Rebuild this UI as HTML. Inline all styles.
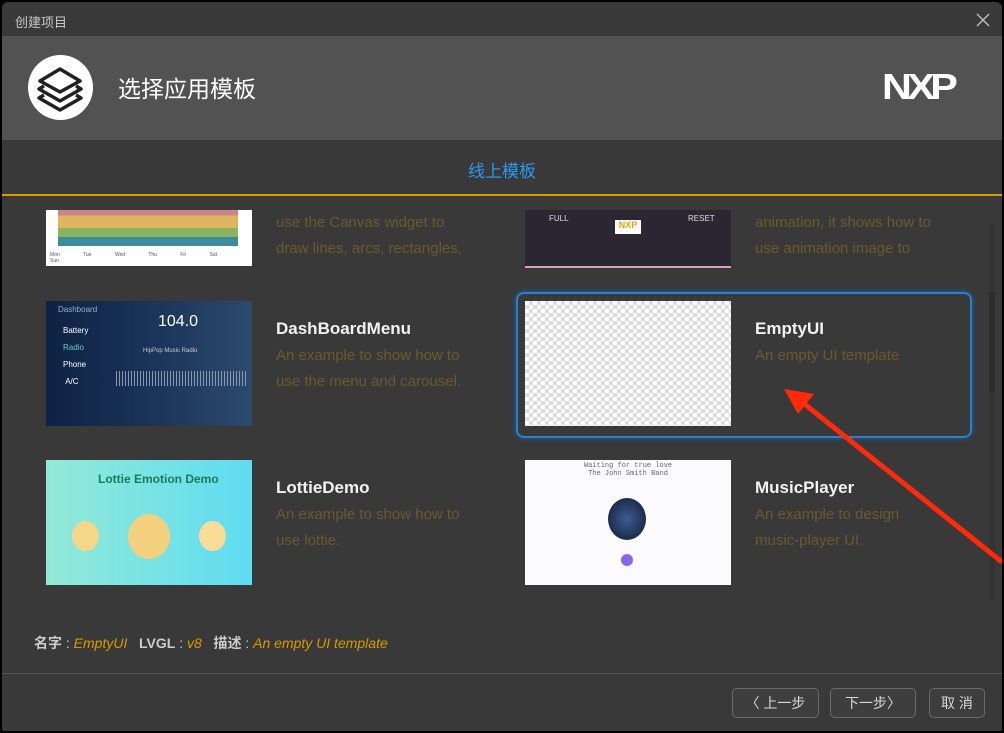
<!DOCTYPE html>
<html><head><meta charset="utf-8"><style>
*{margin:0;padding:0;box-sizing:border-box}
body{width:1004px;height:733px;background:#000;font-family:"Liberation Sans","Noto Sans CJK SC",sans-serif;overflow:hidden;position:relative}
.win{position:absolute;left:2px;top:2px;width:1000px;height:729px;background:#393939;border-radius:6px 6px 2px 2px;overflow:hidden}
.abs{position:absolute}
.title{left:13px;top:10px;color:#c8c8c8;font-size:13px}
.hdr{left:0;top:34px;width:1000px;height:104px;background:#525252}
.tab{left:0;top:155px;width:1000px;text-align:center;color:#2a9af0;font-size:17px}
.line{left:0;top:192px;width:1000px;height:2px;background:#d89a00}
.img{position:absolute;width:206px}
.name{position:absolute;color:#f2f2f2;font-size:17px;font-weight:bold}
.desc{position:absolute;color:#6b5a2a;font-size:15px;line-height:26px}
.btn{position:absolute;top:686px;height:30px;border:1px solid #6a6a6a;border-radius:5px;background:#3e3e3e;color:#d8d8d8;font-size:14px;text-align:center;line-height:28px}
</style></head><body>
<div class="win">
<div class="abs title">创建项目</div>
<svg class="abs" style="left:973px;top:10px" width="16" height="16"><path d="M2 2 L14 14 M14 2 L2 14" stroke="#bbb" stroke-width="1.5"/></svg>
<div class="abs hdr">
 <div class="abs" style="left:26px;top:19px;width:65px;height:65px;border-radius:50%;background:#fff">
  <svg width="65" height="65" viewBox="0 0 65 65"><g fill="none" stroke="#222" stroke-width="3.5" stroke-linejoin="round"><path d="M32 14 L52 26 L32 37 L12 26 Z"/><path d="M16 31 L11 34 L32 46 L53 34 L48 31"/><path d="M16 40 L11 43 L32 55 L53 43 L48 40"/></g></svg>
 </div>
 <div class="abs" style="left:116px;top:34px;color:#fff;font-size:23px">选择应用模板</div>
 <div class="abs" style="left:880px;top:30px;color:#fff;font-size:36px;font-weight:900;letter-spacing:-4px;transform:scaleX(1.15);transform-origin:left">NXP</div>
</div>
<div class="abs tab">线上模板</div>
<div class="abs line"></div>
<div class="abs" style="left:0;top:208px;width:1000px;height:392px;overflow:hidden">
 <div class="img" style="left:44px;top:0;height:56px;background:#fff">
  <div class="abs" style="left:12px;top:0;width:180px;height:36px;background:linear-gradient(#c98589 0 15%,#e0b560 15% 50%,#8ab560 50% 75%,#3d8ba0 75%)"></div>
  <div class="abs" style="left:4px;top:42px;width:196px;color:#555;font-size:5px;word-spacing:22px">Mon Tue Wed Thu Fri Sat Sun</div>
 </div>
 <div class="desc" style="left:274px;top:0">use the Canvas widget to<br>draw lines, arcs, rectangles,</div>
 <div class="img" style="left:523px;top:-14px;height:72px;background:#2a2733;border-bottom:2px solid #d9a0b5">
  <div class="abs" style="left:24px;top:18px;color:#ddd;font-size:8px">FULL</div>
  <div class="abs" style="left:163px;top:18px;color:#ddd;font-size:8px">RESET</div>
  <div class="abs" style="left:90px;top:24px;width:26px;height:14px;background:#fff;color:#e8a000;font-size:9px;font-weight:bold;text-align:center">NXP</div>
 </div>
 <div class="desc" style="left:753px;top:0">animation, it shows how to<br>use animation image to</div>
 <div class="img" style="left:44px;top:91px;height:125px;background:linear-gradient(90deg,#0e2244,#1a3358 50%,#2c4a6e)">
  <div class="abs" style="left:12px;top:4px;color:#8fb0d0;font-size:8px">Dashboard</div>
  <div class="abs" style="left:17px;top:21px;color:#fff;font-size:8px;line-height:17px">Battery<br><span style="color:#6cc">Radio</span><br>Phone<br>&nbsp;A/C</div>
  <div class="abs" style="left:112px;top:12px;color:#fff;font-size:16px">104.0</div>
  <div class="abs" style="left:97px;top:47px;color:#ccc;font-size:6px">HipPop Music Radio</div>
  <div class="abs" style="left:70px;top:70px;width:130px;height:15px;background:repeating-linear-gradient(90deg,#8898b0 0 1px,transparent 1px 3px)"></div>
 </div>
 <div class="name" style="left:274px;top:109px">DashBoardMenu</div>
 <div class="desc" style="left:274px;top:133px">An example to show how to<br>use the menu and carousel.</div>
 <div class="abs" style="left:514px;top:82px;width:456px;height:146px;border:2px solid #2a7fd0;border-radius:8px;box-shadow:0 0 6px #1c5fa8"></div>
 <div class="img" style="left:523px;top:91px;height:125px;background-color:#fff;background-image:linear-gradient(45deg,#ddd 25%,transparent 25%,transparent 75%,#ddd 75%),linear-gradient(45deg,#ddd 25%,transparent 25%,transparent 75%,#ddd 75%);background-size:8px 8px;background-position:0 0,4px 4px"></div>
 <div class="name" style="left:753px;top:109px">EmptyUI</div>
 <div class="desc" style="left:753px;top:133px">An empty UI template</div>
 <div class="img" style="left:44px;top:250px;height:125px;background:linear-gradient(90deg,#93ead6,#5fdcf2)">
  <div class="abs" style="left:52px;top:12px;color:#1a7a5a;font-size:12px;font-weight:bold">Lottie Emotion Demo</div>
  <div class="abs" style="left:26px;top:61px;width:27px;height:30px;border-radius:50%;background:#f5d68a"></div>
  <div class="abs" style="left:82px;top:54px;width:42px;height:45px;border-radius:50%;background:#f3d17f"></div>
  <div class="abs" style="left:153px;top:61px;width:27px;height:30px;border-radius:50%;background:#f8dc98"></div>
 </div>
 <div class="name" style="left:274px;top:268px">LottieDemo</div>
 <div class="desc" style="left:274px;top:292px">An example to show how to<br>use lottie.</div>
 <div class="img" style="left:523px;top:250px;height:125px;background:#fbfaff">
  <div class="abs" style="left:0;top:2px;width:206px;text-align:center;color:#667;font-size:7px;font-family:'Liberation Mono',monospace">Waiting for true love<br>The John Smith Band</div>
  <div class="abs" style="left:83px;top:38px;width:38px;height:42px;border-radius:50%;background:radial-gradient(#3a5d90,#101830)"></div>
  <div class="abs" style="left:96px;top:94px;width:12px;height:12px;border-radius:50%;background:#8866ee"></div>
 </div>
 <div class="name" style="left:753px;top:268px">MusicPlayer</div>
 <div class="desc" style="left:753px;top:292px">An example to design<br>music-player UI.</div>
</div>
<div class="abs" style="left:987px;top:222px;width:6px;height:376px;background:#333"></div>
<div class="abs" style="left:987px;top:290px;width:6px;height:100px;background:#2c2c2c"></div>
<svg class="abs" style="left:0;top:0" width="1000" height="729"><line x1="1000" y1="560" x2="800" y2="400" stroke="#ff2a0a" stroke-width="5"/><polygon points="782,387 812,392 796,412" fill="#ff2a0a"/></svg>
<div class="abs" style="left:32px;top:631px;font-size:14px;color:#ccc"><b>名字</b> : <i style="color:#d89a00">EmptyUI</i> &nbsp; <b>LVGL</b> : <i style="color:#d89a00">v8</i> &nbsp; <b>描述</b> : <i style="color:#d89a00">An empty UI template</i></div>
<div class="abs" style="left:0;top:671px;width:1000px;height:1px;background:#555"></div>
<div class="btn" style="left:730px;width:87px">〈 上一步</div>
<div class="btn" style="left:828px;width:86px">下一步〉</div>
<div class="btn" style="left:927px;width:56px">取 消</div>
</div>
</body></html>
